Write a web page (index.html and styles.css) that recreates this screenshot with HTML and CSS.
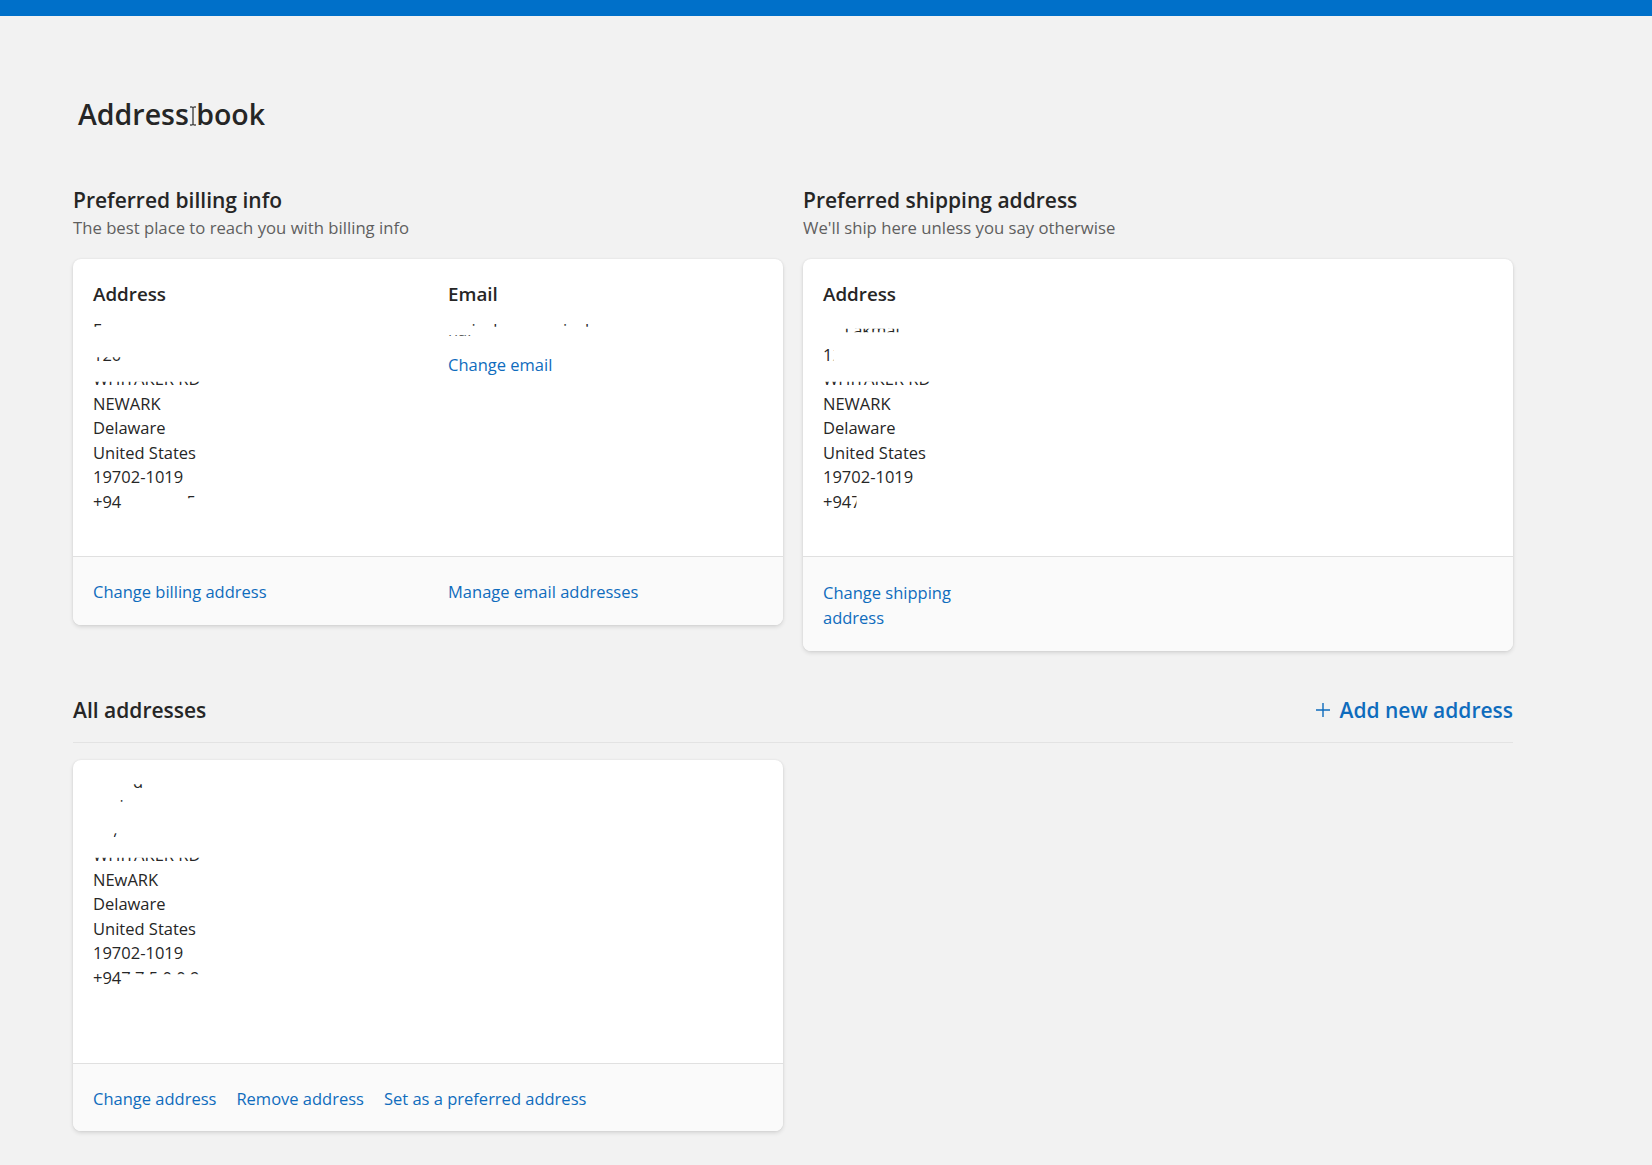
FILE: index.html
```html
<!DOCTYPE html>
<html lang="en">
<head>
    <meta charset="UTF-8">
    <meta name="viewport" content="width=device-width, initial-scale=1.0">
    <title>Address book</title>
    <link rel="stylesheet" href="styles.css">
</head>
<body>

<div class="topbar"></div>

<main class="page">
    <h1 class="page-title">Address<span class="cursor-spot"> <svg class="ibeam" viewBox="0 0 8 20" width="8" height="20"><path d="M1 1h2.5l0.5 0.6 0.5-0.6H7M4 1.6v16.8M1 19h2.5l0.5-0.6 0.5 0.6H7" fill="none" stroke="#000" stroke-width="1"/></svg></span>book</h1>

    <div class="preferred">
        <section>
            <h2 class="section-title">Preferred billing info</h2>
            <p class="section-sub">The best place to reach you with billing info</p>
            <div class="card">
                <div class="card-body two-col">
                    <div>
                        <h3 class="card-label">Address</h3>
                        <div class="line"><span class="peek-top">F</span></div>
                        <div class="line"><span class="peek-low">120</span></div>
                        <div class="line"><span class="peek-low">WHITAKER RD</span></div>
                        <div class="line">NEWARK</div>
                        <div class="line">Delaware</div>
                        <div class="line">United States</div>
                        <div class="line">19702-1019</div>
                        <div class="line">+94<span class="hidden">77 123 4</span><span class="peek-top">5</span></div>
                    </div>
                    <div>
                        <h3 class="card-label">Email</h3>
                        <div class="line"><span class="peek-base">nal</span><span class="peek-top">i</span><span class="hidden">.la</span><span class="peek-top">l</span><span class="hidden">a.lakm@</span><span class="peek-top">i</span><span class="hidden">co</span><span class="peek-top">l</span></div>
                        <a class="link change-email" href="#">Change email</a>
                    </div>
                </div>
                <div class="card-foot two-col">
                    <a class="link" href="#">Change billing address</a>
                    <a class="link" href="#">Manage email addresses</a>
                </div>
            </div>
        </section>

        <section>
            <h2 class="section-title">Preferred shipping address</h2>
            <p class="section-sub">We'll ship here unless you say otherwise</p>
            <div class="card">
                <div class="card-body">
                    <h3 class="card-label">Address</h3>
                    <div class="line"><span class="hidden">Na</span><span class="peek-mid">Lakmal</span></div>
                    <div class="line"><span class="peek-right">12</span></div>
                    <div class="line"><span class="peek-low">WHITAKER RD</span></div>
                    <div class="line">NEWARK</div>
                    <div class="line">Delaware</div>
                    <div class="line">United States</div>
                    <div class="line">19702-1019</div>
                    <div class="line">+94<span class="peek-right">7</span></div>
                </div>
                <div class="card-foot">
                    <a class="link narrow" href="#">Change shipping address</a>
                </div>
            </div>
        </section>
    </div>

    <div class="all-head">
        <h2 class="section-title">All addresses</h2>
        <a class="add-link" href="#">
            <svg viewBox="0 0 16 16" width="16" height="16"><path d="M8 1v14M1 8h14" stroke="currentColor" stroke-width="1.4" fill="none"/></svg>
            Add new address
        </a>
    </div>

    <div class="all-list">
        <div class="card">
            <div class="card-body tall">
                <div class="line"><span class="hidden">Nalin</span><span class="peek-low">d</span></div>
                <div class="line"><span class="hidden">Lak</span><span class="peek-top">i</span></div>
                <div class="line"><span class="hidden">Ap</span><span class="peek-low">/</span></div>
                <div class="line"><span class="peek-low">WHITAKER RD</span></div>
                <div class="line">NEwARK</div>
                <div class="line">Delaware</div>
                <div class="line">United States</div>
                <div class="line">19702-1019</div>
                <div class="line">+94<span class="peek-top">7 7 5 0 0 9</span></div>
            </div>
            <div class="card-foot actions">
                <a class="link" href="#">Change address</a>
                <a class="link" href="#">Remove address</a>
                <a class="link" href="#">Set as a preferred address</a>
            </div>
        </div>
    </div>
</main>

</body>
</html>
```

FILE: styles.css
```css
/* page */
body {
    margin: 0;
    padding: 0;
    background-color: #f2f2f2;
    font-family: "Segoe UI", "Open Sans", sans-serif;
    color: #262626;
}

.topbar {
    height: 16px;
    background-color: #0070c9;
}

.page {
    width: 1440px;
    margin-left: 73px;
    padding-bottom: 40px;
}

.page-title {
    margin: 80px 0 0 5px;
    font-size: 28.5px;
    line-height: 36px;
    font-weight: 600;
}

.cursor-spot {
    position: relative;
}

.ibeam {
    position: absolute;
    left: 0;
    top: 11px;
}

/* sections */
.preferred {
    display: grid;
    grid-template-columns: 710px 710px;
    column-gap: 20px;
    align-items: start;
    margin-top: 54px;
}

.section-title {
    margin: 0;
    font-size: 21px;
    line-height: 28px;
    font-weight: 600;
}

.section-sub {
    margin: 2px 0 0;
    font-size: 16.7px;
    line-height: 24px;
    color: #5f5f5f;
}

/* cards */
.card {
    margin-top: 19px;
    background-color: #fff;
    border-radius: 8px;
    box-shadow: 0 2px 4px rgba(0, 0, 0, 0.12), 0 0 2px rgba(0, 0, 0, 0.08);
    overflow: hidden;
}

.card-body {
    box-sizing: border-box;
    min-height: 297px;
    padding: 20px 20px;
    font-size: 16.5px;
    line-height: 24.5px;
}

.card-body.tall {
    min-height: 303px;
    padding-top: 10px;
}

.two-col {
    display: grid;
    grid-template-columns: 1fr 1fr;
    column-gap: 40px;
}

.card-label {
    margin: 0 0 9px;
    font-size: 18.8px;
    line-height: 30px;
    font-weight: 600;
}

.line {
    height: 24.5px;
    white-space: nowrap;
}

.card-foot {
    padding: 23px 20px 20px;
    border-top: 1px solid #e0e0e0;
    background-color: #fafafa;
    font-size: 16.5px;
    line-height: 24.5px;
}

.card-foot.actions {
    display: flex;
    gap: 20px;
}

.link {
    color: #0f6cbd;
    text-decoration: none;
}

.link.narrow {
    display: inline-block;
    width: 170px;
    line-height: 25px;
}

.change-email {
    display: inline-block;
    margin-top: 10px;
}

/* redacted bits */
.hidden {
    visibility: hidden;
}

.peek-top,
.peek-low,
.peek-mid,
.peek-base,
.peek-right {
    display: inline-block;
}

.peek-top {
    clip-path: inset(0 0 64% 0);
}

.peek-low {
    clip-path: inset(60% 0 18% 0);
}

.peek-mid {
    clip-path: inset(44% 0 42% 0);
}

.peek-base {
    clip-path: inset(70% 0 22% 0);
}

.peek-right {
    clip-path: inset(0 45% 0 0);
}

/* all addresses */
.all-head {
    display: flex;
    justify-content: space-between;
    align-items: center;
    margin-top: 45px;
    padding-bottom: 18px;
    border-bottom: 1px solid #e3e3e3;
}

.add-link {
    display: flex;
    align-items: center;
    gap: 9px;
    color: #0f6cbd;
    text-decoration: none;
    font-size: 21px;
    line-height: 28px;
    font-weight: 600;
}

.all-list {
    display: grid;
    grid-template-columns: 710px 710px;
    column-gap: 20px;
}

.all-list .card {
    margin-top: 17px;
}
```
